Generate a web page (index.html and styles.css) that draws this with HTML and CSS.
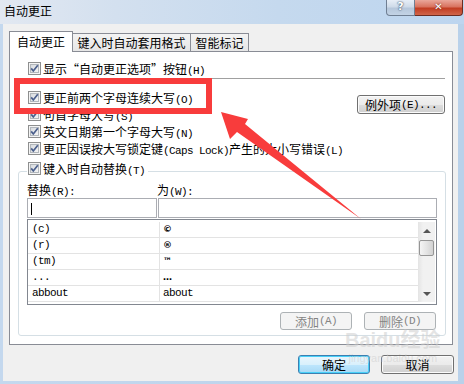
FILE: index.html
```html
<!DOCTYPE html>
<html lang="zh-CN">
<head>
  <meta charset="UTF-8" />
  <title>自动更正</title>
  <link rel="stylesheet" href="styles.css">
</head>
<body>
  <svg width="0" height="0" class="defs">
    <defs>
      <linearGradient id="cbg" x1="0" y1="0" x2="1" y2="1">
        <stop offset="0" stop-color="#d6d9dd"/>
        <stop offset="1" stop-color="#f6f6f6"/>
      </linearGradient>
      <symbol id="cb" viewBox="0 0 13 13">
        <rect x="0.5" y="0.5" width="12" height="12" fill="#f4f4f4" stroke="#8e8f8f"/>
        <rect x="2.5" y="2.5" width="8" height="8" fill="url(#cbg)" stroke="#b2b7bc"/>
        <path d="M3.2 6.4 L5.3 9 L9.8 3.2" fill="none" stroke="#4b5f8c" stroke-width="1.7"/>
      </symbol>
    </defs>
  </svg>

  <div class="window">
    <div class="titlebar">
      <div class="title">自动更正</div>
      <div class="caption">
        <div class="cap help">?</div>
        <div class="cap close">✕</div>
      </div>
    </div>

    <div class="client">
      <div class="tabs">
        <div class="tab active">自动更正</div>
        <div class="tab t2">键入时自动套用格式</div>
        <div class="tab t3">智能标记</div>
      </div>

      <div class="panel">
        <div class="chk first"><svg class="cb"><use href="#cb"/></svg><span>显示“自动更正选项”按钮<span class="k">(H)</span></span></div>
        <div class="sep"></div>

        <div class="opts">
          <div class="col">
            <div class="chk"><svg class="cb"><use href="#cb"/></svg><span>更正前两个字母连续大写<span class="k">(O)</span></span></div>
            <div class="chk"><svg class="cb"><use href="#cb"/></svg><span>句首字母大写<span class="k">(S)</span></span></div>
            <div class="chk"><svg class="cb"><use href="#cb"/></svg><span>英文日期第一个字母大写<span class="k">(N)</span></span></div>
            <div class="chk"><svg class="cb"><use href="#cb"/></svg><span>更正因误按大写锁定键<span class="k">(Caps Lock)</span>产生的大小写错误<span class="k">(L)</span></span></div>
          </div>
          <div class="btn exc">例外项<span class="k">(E)...</span></div>
        </div>

        <div class="group">
          <div class="chk legend"><svg class="cb"><use href="#cb"/></svg><span>键入时自动替换<span class="k">(T)</span></span></div>
          <div class="labels">
            <span>替换<span class="k">(R):</span></span>
            <span>为<span class="k">(W):</span></span>
          </div>
          <div class="inputs">
            <div class="field"><div class="caret"></div></div>
            <div class="field"></div>
          </div>
          <div class="listbox">
            <div class="rows">
              <div class="row"><span class="c1">(c)</span><span class="c2">©</span></div>
              <div class="row"><span class="c1">(r)</span><span class="c2">®</span></div>
              <div class="row"><span class="c1">(tm)</span><span class="c2">™</span></div>
              <div class="row"><span class="c1">...</span><span class="c2">…</span></div>
              <div class="row"><span class="c1">abbout</span><span class="c1 c2w">about</span></div>
            </div>
            <div class="sb">
              <div class="sb-btn"><i class="up"></i></div>
              <div class="thumb"></div>
              <div class="sb-track"></div>
              <div class="sb-btn"><i class="down"></i></div>
            </div>
          </div>
          <div class="actions">
            <div class="btn dis">添加<span class="k">(A)</span></div>
            <div class="btn dis">删除<span class="k">(D)</span></div>
          </div>
        </div>
      </div>

      <div class="footer">
        <div class="btn def ok">确定</div>
        <div class="btn cancel">取消</div>
      </div>
    </div>

    <div class="watermark">
      <div class="wm-big">Baidu经验</div>
      <div class="wm-small">jingyan.baidu.com</div>
    </div>
  </div>

  <!-- annotation drawn over the screenshot -->
  <svg class="marks" width="464" height="384" viewBox="0 0 464 384">
    <rect x="17" y="81" width="192" height="30" fill="none" stroke="#f83c3c" stroke-width="6"/>
    <polygon points="221,112 248,119 245,124 361,219 237,132 230,139" fill="#f83c3c"/>
  </svg>
</body>
</html>
```

FILE: styles.css
```css
body {
  margin: 0;
  width: 464px;
  height: 384px;
  overflow: hidden;
  position: relative;
  font-family: "Noto Sans CJK SC", sans-serif;
  font-size: 12px;
  color: #000;
}
.defs {
  position: absolute;
}
.window {
  width: 464px;
  height: 384px;
  display: flex;
  flex-direction: column;
  background: linear-gradient(90deg, #c4d8ee 0%, #b9d1ea 100%);
  position: relative;
}
.titlebar {
  height: 24px;
  display: flex;
  justify-content: space-between;
  align-items: flex-start;
  background: linear-gradient(90deg, #e2e8f1 0%, #d3e0ef 25%, #c5d9ee 60%, #bdd5ef 100%);
}
.title {
  padding: 3px 0 0 4px;
  line-height: 16px;
  font-size: 12px;
}
.caption {
  display: flex;
  margin-right: 1px;
}
.cap {
  height: 16px;
  box-sizing: border-box;
  color: #fff;
  text-align: center;
  font-family: "DejaVu Sans", sans-serif;
  font-weight: bold;
  line-height: 14px;
}
.help {
  width: 29px;
  border: 1px solid #6f7e92;
  border-top: none;
  border-radius: 0 0 0 4px;
  background: linear-gradient(#e7eef7 0%, #cfdbe9 45%, #b6c7db 55%, #c3d3e5 100%);
  font-size: 11px;
  text-shadow: 0 0 2px #384a63, 0 0 1px #384a63;
}
.close {
  width: 48px;
  border: 1px solid #6b2c22;
  border-top: none;
  border-left: none;
  border-radius: 0 0 4px 0;
  background: linear-gradient(#eaa79a 0%, #d9735f 45%, #c23d22 55%, #d0654a 100%);
  font-size: 10px;
  text-shadow: 0 0 2px #5a1a10;
}
.client {
  flex: 1;
  margin: 0 6px 3px 3px;
  padding: 7px 5px 0 6px;
  background: #f0f0f0;
}
.tabs {
  display: flex;
  align-items: flex-end;
  height: 20px;
  position: relative;
  z-index: 1;
}
.tab {
  box-sizing: border-box;
  height: 18px;
  border: 1px solid #898c95;
  border-bottom: none;
  background: linear-gradient(#f3f3f3, #e6e6e6);
  text-align: center;
  line-height: 17px;
}
.tab.active {
  width: 64px;
  height: 21px;
  margin-bottom: -1px;
  background: #fff;
  line-height: 19px;
  position: relative;
  z-index: 2;
}
.t2 {
  width: 119px;
  margin-left: -1px;
}
.t3 {
  width: 59px;
  margin-left: -1px;
}
.panel {
  border: 1px solid #898c95;
  background: #fff;
  padding: 8px 0 8px 0;
}
.k {
  font-family: "Liberation Mono", monospace;
  font-size: 11px;
  letter-spacing: -0.6px;
}
.chk {
  display: flex;
  align-items: center;
  gap: 2px;
  height: 17px;
  white-space: nowrap;
}
.cb {
  width: 13px;
  height: 13px;
  flex-shrink: 0;
}
.first {
  padding-left: 18px;
}
.sep {
  height: 1px;
  background: #a0a0a0;
  margin: 1px 7px 10px 10px;
}
.opts {
  display: flex;
  justify-content: space-between;
  align-items: flex-start;
  padding: 0 7px 0 18px;
}
.btn {
  box-sizing: border-box;
  height: 19px;
  border: 1px solid #707070;
  border-radius: 3px;
  background: linear-gradient(#f2f2f2 0%, #ebebeb 50%, #dddddd 51%, #cfcfcf 100%);
  box-shadow: inset 0 0 0 1px #fbfbfb;
  display: flex;
  align-items: center;
  justify-content: center;
  white-space: nowrap;
}
.exc {
  width: 88px;
  margin-top: 6px;
}
.group {
  margin: 14px 6px 0 8px;
  border: 1px solid #d5dfe5;
  border-radius: 3px;
  padding: 0 8px 5px 8px;
}
.legend {
  width: fit-content;
  margin-top: -12px;
  padding: 0 3px 0 1px;
  background: #fff;
}
.labels {
  display: grid;
  grid-template-columns: 130px 1fr;
  height: 16px;
  margin-top: 5px;
  align-items: center;
  line-height: 16px;
}
.inputs {
  display: grid;
  grid-template-columns: 130px 1fr;
  gap: 1px;
  height: 20px;
}
.field {
  border: 1px solid #abadb3;
  background: #fff;
}
.caret {
  width: 1px;
  height: 12px;
  margin: 4px 0 0 3px;
  background: #000;
}
.listbox {
  box-sizing: border-box;
  height: 86px;
  margin-top: 1px;
  border: 1px solid #828790;
  padding: 2px 1px 2px 0;
  display: flex;
}
.rows {
  width: 390px;
}
.row {
  box-sizing: border-box;
  height: 16px;
  border-bottom: 1px solid #e3e3e3;
  display: grid;
  grid-template-columns: 132px 1fr;
  line-height: 15px;
}
.c1 {
  font-family: "Liberation Mono", monospace;
  font-size: 11px;
  letter-spacing: -0.6px;
  padding-left: 4px;
  border-right: 1px solid #e3e3e3;
}
.c2 {
  font-family: "DejaVu Sans", sans-serif;
  font-size: 9px;
  font-weight: bold;
  padding-left: 3px;
}
.c2w {
  border-right: none;
  padding-left: 3px;
}
.sb {
  width: 17px;
  display: flex;
  flex-direction: column;
  background: linear-gradient(90deg, #e4e4e4 0%, #f1f1f1 30%, #f1f1f1 100%);
}
.sb-btn {
  height: 17px;
  display: flex;
  align-items: center;
  justify-content: center;
}
.up {
  border-left: 4px solid transparent;
  border-right: 4px solid transparent;
  border-bottom: 4px solid #555;
}
.down {
  border-left: 4px solid transparent;
  border-right: 4px solid transparent;
  border-top: 4px solid #555;
}
.thumb {
  box-sizing: border-box;
  height: 16px;
  margin: 1px 1px 0 1px;
  border: 1px solid #959595;
  border-radius: 2px;
  background: linear-gradient(90deg, #f4f4f4 0%, #e4e4e4 50%, #d2d2d2 100%);
}
.sb-track {
  flex: 1;
}
.actions {
  display: flex;
  justify-content: flex-end;
  gap: 12px;
  margin: 7px 1px 0 0;
}
.btn.dis {
  width: 72px;
  height: 18px;
  border-color: #adb2b5;
  background: #f4f4f4;
  box-shadow: none;
  color: #838383;
}
.footer {
  display: flex;
  justify-content: flex-end;
  gap: 11px;
  margin: 10px -1px 0 0;
}
.ok {
  width: 72px;
}
.cancel {
  width: 73px;
}
.btn.def {
  border-color: #3c7fb1;
  background: linear-gradient(#eaf6fd 0%, #d9f0fc 50%, #bee6fd 51%, #a7d9f5 100%);
  box-shadow: inset 0 0 0 1px #48d0f8;
}
.watermark {
  position: absolute;
  left: 345px;
  top: 328px;
  color: rgba(205, 205, 205, 0.55);
  text-align: center;
  pointer-events: none;
}
.wm-big {
  font-family: "Liberation Sans", "Noto Sans CJK SC", sans-serif;
  font-size: 20px;
  font-weight: bold;
  line-height: 24px;
}
.wm-small {
  font-family: "Liberation Sans", sans-serif;
  font-size: 11px;
  line-height: 12px;
}
.marks {
  position: absolute;
  left: 0;
  top: 0;
  pointer-events: none;
}
```
